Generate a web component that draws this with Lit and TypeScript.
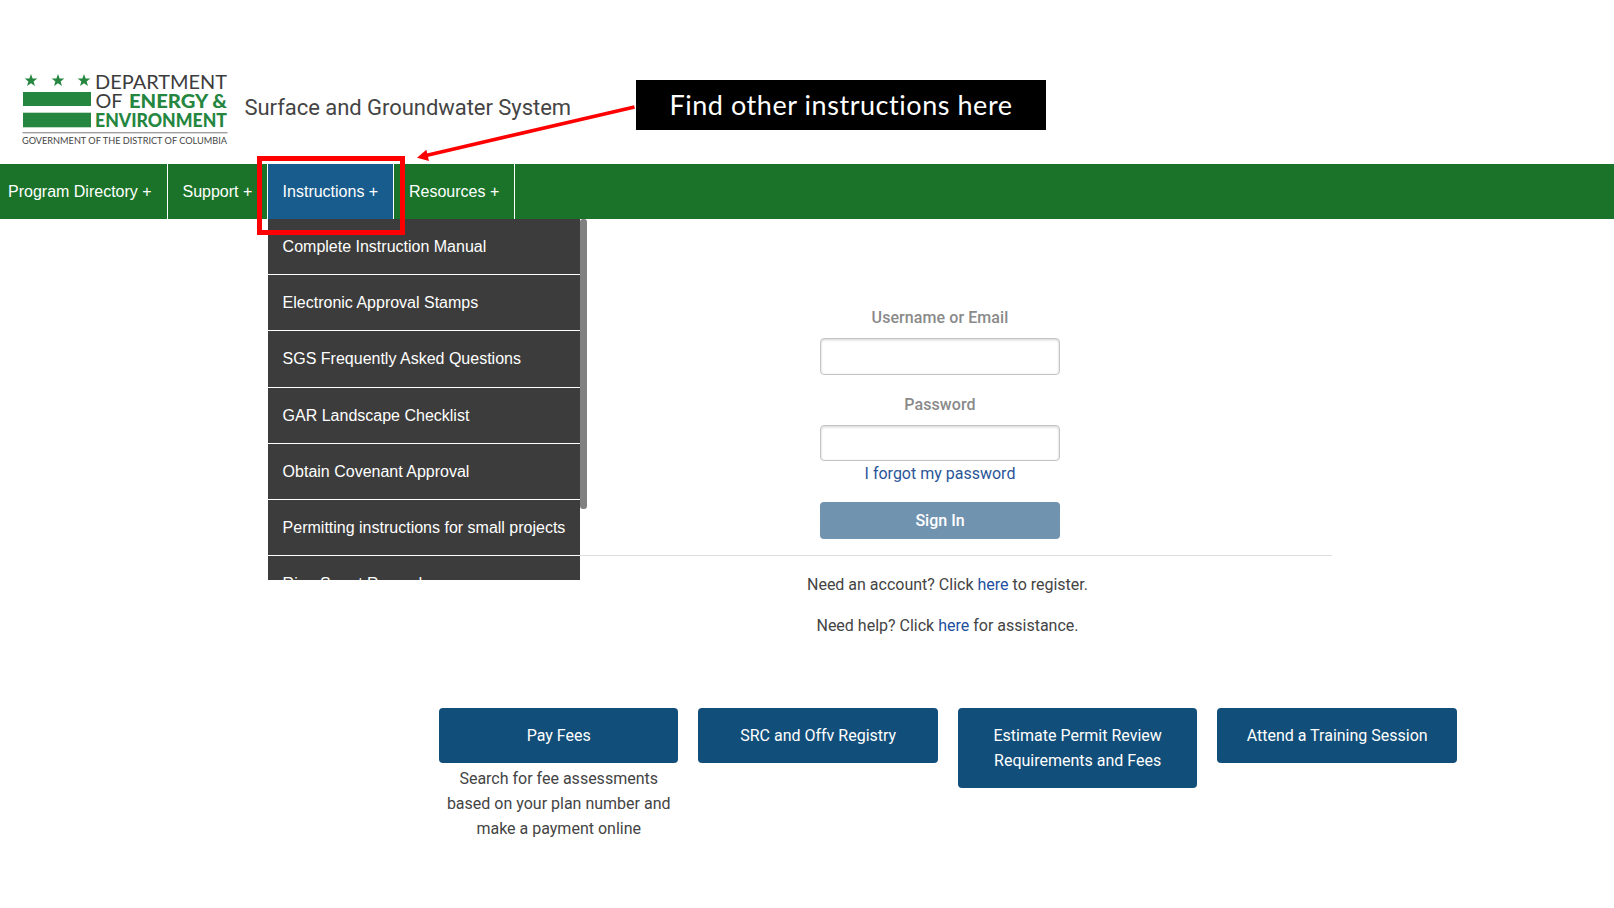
import { LitElement, html, css, svg } from "lit";
import { customElement } from "lit/decorators.js";
import { classMap } from "lit/directives/class-map.js";

@customElement("agency-logo")
class AgencyLogo extends LitElement {
  static styles = css`
    :host { display: block; width: 210px; height: 76px; }
    svg { display: block; }
    text { font-family: Lato, sans-serif; }
    .green { fill: #25863f; }
    .dark { fill: #3c3c3c; }
    .bold { font-weight: 900; }
    .gray { fill: #a0a0a0; }
    .small { fill: #444; }
  `;
  star(x: number) {
    return svg`<path class="green" transform="translate(${x} 10.6)"
      d="M0 -6.5 L1.6 -2 L6.3 -2 L2.6 .9 L4 5.4 L0 2.7 L-4 5.4 L-2.6 .9 L-6.3 -2 L-1.6 -2Z"/>`;
  }
  render() {
    return html`<svg width="210" height="76" viewBox="0 0 210 76">
      ${[11, 38, 64].map((x) => this.star(x))}
      <rect class="green" x="3" y="22" width="68" height="14" />
      <rect class="green" x="3" y="42.7" width="68" height="14.6" />
      <text class="dark" x="75" y="19.2" font-size="19.5" textLength="132" lengthAdjust="spacingAndGlyphs">DEPARTMENT</text>
      <text class="dark" x="75.5" y="38" font-size="19" textLength="27" lengthAdjust="spacingAndGlyphs">OF</text>
      <text class="green bold" x="109" y="38" font-size="18.5" textLength="98" lengthAdjust="spacingAndGlyphs">ENERGY &amp;</text>
      <text class="green bold" x="75" y="57.3" font-size="19.3" textLength="132" lengthAdjust="spacingAndGlyphs">ENVIRONMENT</text>
      <rect class="gray" x="2.5" y="62" width="205" height="1.4" />
      <text class="small" x="2" y="73.8" font-size="9" textLength="205" lengthAdjust="spacingAndGlyphs">GOVERNMENT OF THE DISTRICT OF COLUMBIA</text>
    </svg>`;
  }
}

@customElement("main-nav")
class MainNav extends LitElement {
  static styles = css`
    :host { display: block; font: 16px/24px "Liberation Sans", Arial, sans-serif; color: #fff; }
    .bar { display: flex; height: 55px; background: #1a7329; }
    .item { position: relative; box-sizing: border-box; border-right: 1px solid #fff; padding: 16px 14px 0 15px; white-space: nowrap; }
    .directory { width: 168px; padding-left: 8px; }
    .support { width: 100px; padding-left: 14.5px; }
    .instructions { width: 126px; padding-left: 14.6px; }
    .resources { width: 121px; }
    .active { background: #185b8d; }
    .menu { position: absolute; z-index: 2; top: 55px; left: 0; display: flex; align-items: flex-start; }
    .list { width: 312px; height: 361px; overflow: hidden; background: #3c3c3c; }
    .entry { box-sizing: border-box; height: 56.2px; padding: 16px 14.6px 0; border-bottom: 1px solid #fff; }
    .thumb { width: 7px; height: 290px; background: #808080; border-radius: 3px; }
  `;
  private entries = [
    "Complete Instruction Manual",
    "Electronic Approval Stamps",
    "SGS Frequently Asked Questions",
    "GAR Landscape Checklist",
    "Obtain Covenant Approval",
    "Permitting instructions for small projects",
    "RiverSmart Rewards",
  ];
  private items = ["Program Directory", "Support", "Instructions", "Resources"];
  render() {
    return html`<nav class="bar">
      ${this.items.map((label) => {
        const open = label === "Instructions";
        return html`<div class=${classMap({
          item: true,
          active: open,
          directory: label === "Program Directory",
          support: label === "Support",
          instructions: open,
          resources: label === "Resources",
        })}>${label} +${open
          ? html`<div class="menu">
              <div class="list">${this.entries.map((e) => html`<div class="entry">${e}</div>`)}</div>
              <div class="thumb"></div>
            </div>`
          : null}</div>`;
      })}
    </nav>`;
  }
}

@customElement("login-form")
class LoginForm extends LitElement {
  static styles = css`
    :host { display: flex; flex-direction: column; align-items: center; width: 784px; padding-bottom: 16px; border-bottom: 1px solid #ddd; font: 16px/25px Roboto, sans-serif; }
    label { color: #8a8a8a; font-weight: 500; letter-spacing: .08px; }
    input { box-sizing: border-box; width: 240px; height: 37px; border: 1px solid #c4c4c4; border-radius: 4px; box-shadow: inset 0 1px 3px rgba(0,0,0,.18); margin: 8px 0 17px; background: #fff; }
    .pass { height: 36px; margin: 8px 0 0; }
    .forgot { color: #2a5599; text-decoration: none; }
    button { width: 240px; height: 37px; margin-top: 16px; padding: 0; border: 0; border-radius: 4px; background: #7093af; color: #fff; font: 500 16px/37px Roboto, sans-serif; }
  `;
  render() {
    return html`
      <label>Username or Email</label>
      <input type="text" />
      <label>Password</label>
      <input class="pass" type="password" />
      <a class="forgot">I forgot my password</a>
      <button>Sign In</button>`;
  }
}

@customElement("app-root")
class AppRoot extends LitElement {
  static styles = css`
    :host { display: block; position: relative; width: 1614px; height: 908px; overflow: hidden; background: #fff; font: 16px/25px Roboto, sans-serif; color: #444; }
    header { display: flex; box-sizing: border-box; height: 164px; padding: 70px 0 0 20px; }
    .title { margin: 21px 0 0 14.5px; font-size: 22px; line-height: 34px; white-space: nowrap; letter-spacing: -.04px; }
    .login { display: flex; justify-content: center; padding: 86px 0 0 266px; }
    .help { display: flex; flex-direction: column; align-items: center; padding: 16px 0 0 281px; gap: 16px; }
    .help a { color: #1f50a0; }
    .actions { display: grid; grid-template-columns: repeat(4, 239.4px); gap: 20.1px; align-items: start; padding: 70px 0 0 439px; text-align: center; }
    .action { display: block; border-radius: 4px; background: #114e79; color: #fff; padding: 15px 20px; }
    .note { padding-top: 3px; }
    .callout { position: absolute; left: 636px; top: 80px; width: 410px; height: 50px; background: #000; color: #fff; font: 27px/49px Lato, sans-serif; text-align: center; letter-spacing: .55px; white-space: nowrap; }
    .frame { position: absolute; z-index: 3; left: 257px; top: 156px; width: 138px; height: 69px; border: 5px solid #f00; }
    .arrow { position: absolute; z-index: 3; left: 410px; top: 100px; }
  `;
  private actions = [
    ["Pay Fees", "Search for fee assessments based on your plan number and make a payment online"],
    ["SRC and Offv Registry", ""],
    ["Estimate Permit Review Requirements and Fees", ""],
    ["Attend a Training Session", ""],
  ];
  render() {
    return html`
      <header>
        <agency-logo></agency-logo>
        <div class="title">Surface and Groundwater System</div>
      </header>
      <main-nav></main-nav>
      <div class="login"><login-form></login-form></div>
      <div class="help">
        <div>Need an account? Click <a>here</a> to register.</div>
        <div>Need help? Click <a>here</a> for assistance.</div>
      </div>
      <div class="actions">
        ${this.actions.map(([label, note]) => html`<div>
          <a class="action">${label}</a>
          ${note ? html`<div class="note">${note}</div>` : null}
        </div>`)}
      </div>
      <div class="callout">Find other instructions here</div>
      <div class="frame"></div>
      <svg class="arrow" width="230" height="70" viewBox="0 0 230 70">
        <path d="M224.5 7 L16 55.5" stroke="#f00" stroke-width="3.6" fill="none" />
        <path d="M7 57.8 L16.4 49.8 L19 61Z" fill="#f00" />
      </svg>`;
  }
}
